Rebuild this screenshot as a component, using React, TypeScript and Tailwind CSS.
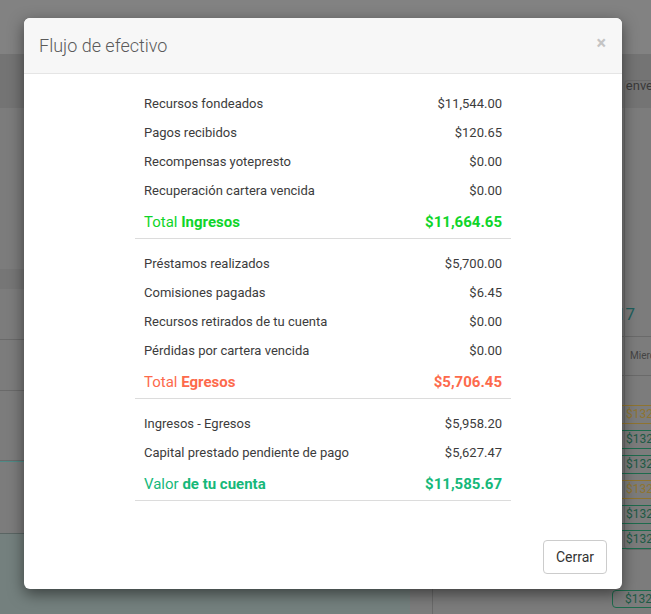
import React from "react";

const sections = [
  {
    rows: [
      ["Recursos fondeados", "$11,544.00"],
      ["Pagos recibidos", "$120.65"],
      ["Recompensas yotepresto", "$0.00"],
      ["Recuperación cartera vencida", "$0.00"],
    ],
    a: "Total ",
    b: "Ingresos",
    total: "$11,664.65",
    color: "text-[#0fd52a]",
  },
  {
    rows: [
      ["Préstamos realizados", "$5,700.00"],
      ["Comisiones pagadas", "$6.45"],
      ["Recursos retirados de tu cuenta", "$0.00"],
      ["Pérdidas por cartera vencida", "$0.00"],
    ],
    a: "Total ",
    b: "Egresos",
    total: "$5,706.45",
    color: "text-[#fd6a4c]",
  },
  {
    rows: [
      ["Ingresos - Egresos", "$5,958.20"],
      ["Capital prestado pendiente de pago", "$5,627.47"],
    ],
    a: "Valor ",
    b: "de tu cuenta",
    total: "$11,585.67",
    color: "text-[#16b87a]",
  },
];

const badges = ["gold", "green", "green", "gold", "green", "green"];

export default function App() {
  return (
    <div
      className="relative w-[651px] h-[614px] overflow-hidden bg-[#7c7c7c]"
      style={{ fontFamily: "Roboto, 'Open Sans', sans-serif" }}
    >
      {/* background page (dimmed) */}
      <div className="flex flex-col h-full">
        <div className="h-[54px] bg-[#828282]" />
        <div className="h-[54px] bg-[#747474] flex items-center justify-end">
          <span className="text-[13px] text-[#3a3a3a] mr-[-2px] mt-[10px]">enve</span>
        </div>
        <div className="flex flex-1">
          <div className="w-[410px] flex flex-col">
            <div className="h-[161px]" />
            <div className="h-[20px] bg-[#767676]" />
            <div className="h-[51px] border-b border-[#6a6a6a]" />
            <div className="h-[51px] border-b border-[#6a6a6a]" />
            <div className="h-[70px] border-b border-[#6a6a6a]" />
            <div className="h-[72px] border-t border-[#4f8a86]" />
            <div className="flex-1 bg-[#74807e] border-t border-[#5a6563]" />
          </div>
          <div className="flex-1 relative">
            <div className="absolute left-[22px] top-[0px] w-[1px] h-full bg-[#6a6a6a]" />
            <div className="absolute left-[214px] top-[-28px] w-[30px] h-[470px] border border-[#6a6a6a] rounded-[4px]" />
            <div className="absolute left-[206px] top-[194px] text-[17px] text-[#1e5f5c]">17</div>
            <div className="absolute left-[180px] top-[228px] w-[80px] h-[1px] bg-[#6a6a6a]" />
            <div className="absolute left-[220px] top-[240px] text-[10px] text-[#444]">Mierc</div>
            <div className="absolute left-[180px] top-[267px] w-[80px] h-[1px] bg-[#6a6a6a]" />
            <div className="absolute left-[203px] top-[297px] flex flex-col gap-[6px]">
              {badges.map((b, i) => (
                <div
                  key={i}
                  className={
                    b === "gold"
                      ? "h-[19px] w-[50px] border border-[#8f7430] rounded-[3px] pl-[12px] text-[12px] leading-[17px] text-[#8f7430]"
                      : "h-[19px] w-[50px] border border-[#1d6b4d] rounded-[3px] pl-[12px] text-[12px] leading-[17px] text-[#1d5a45]"
                  }
                >
                  $132
                </div>
              ))}
            </div>
            <div className="absolute left-[202px] top-[482px] h-[18px] w-[50px] border border-[#1d6b4d] rounded-[4px] pl-[12px] text-[12px] leading-[16px] text-[#1d5a45]">
              $132
            </div>
          </div>
        </div>
      </div>

      {/* modal */}
      <div className="absolute left-[24px] top-[18px] w-[598px] h-[571px] bg-white rounded-[6px] shadow-[0_5px_15px_rgba(0,0,0,0.5)] flex flex-col overflow-hidden">
        <div className="h-[56px] bg-[#f7f7f7] border-b border-[#e5e5e5] flex items-center justify-between px-[15px]">
          <span className="text-[18px] font-light text-[#5a5a5a]">Flujo de efectivo</span>
          <span className="text-[18px] font-bold leading-none text-[#c4c4c4] mr-[1px] -mt-[5px]">×</span>
        </div>
        <div className="pt-[15px] flex flex-col items-center">
          {sections.map((s, i) => (
            <div key={i} className="w-[376px] border-b border-[#dcdcdc] mb-[10px]">
              {s.rows.map(([l, v]) => (
                <div key={l} className="h-[29px] flex items-center justify-between px-[9px] text-[13px] text-[#3c3c3c]">
                  <span>{l}</span>
                  <span>{v}</span>
                </div>
              ))}
              <div className={`h-[33px] flex items-center justify-between px-[9px] pt-[1px] text-[15px] ${s.color}`}>
                <span>
                  {s.a}
                  <span className="font-bold">{s.b}</span>
                </span>
                <span className="font-bold">{s.total}</span>
              </div>
            </div>
          ))}
        </div>
        <div className="mt-auto flex justify-end p-[15px]">
          <button className="w-[64px] h-[34px] border border-[#cccccc] rounded-[4px] text-[14px] text-[#333] bg-white">
            Cerrar
          </button>
        </div>
      </div>
    </div>
  );
}
